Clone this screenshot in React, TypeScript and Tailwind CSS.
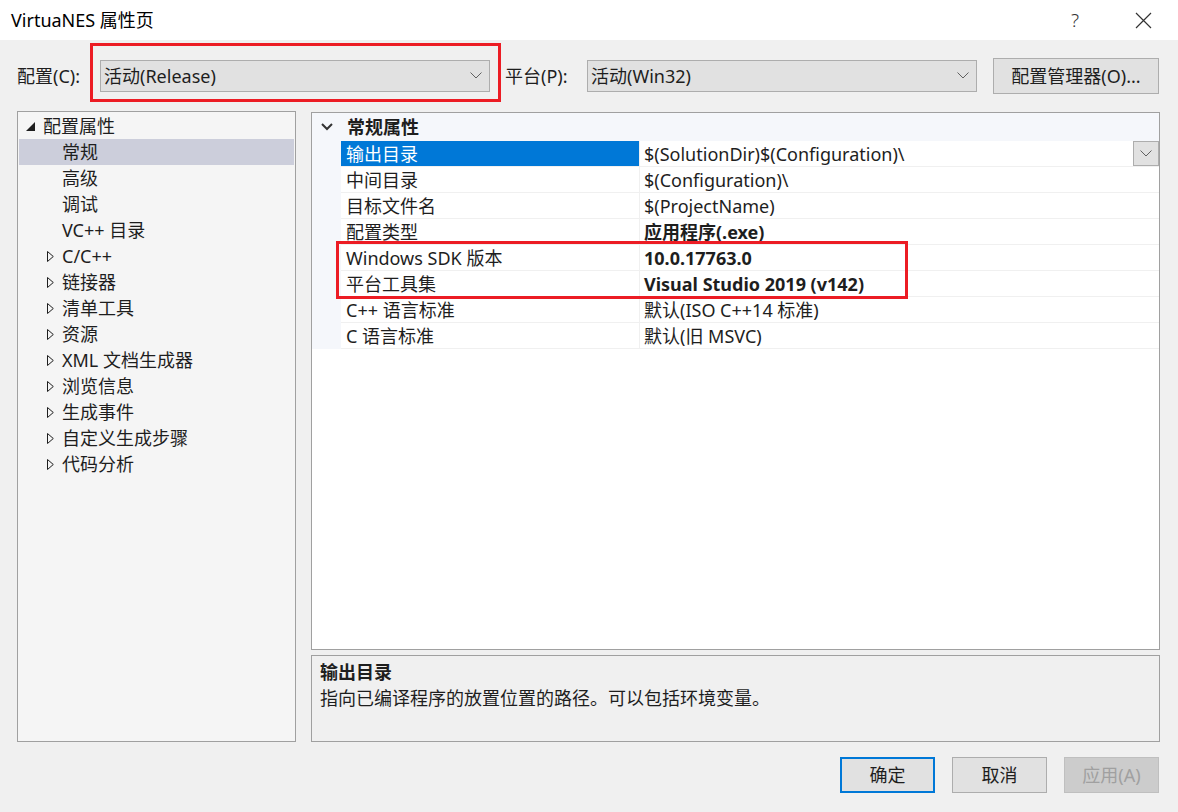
import React from 'react';

type TreeItem = { label: string; level: 0 | 1; expander?: 'open' | 'closed'; selected?: boolean };

const treeItems: TreeItem[] = [
  { label: '配置属性', level: 0, expander: 'open' },
  { label: '常规', level: 1, selected: true },
  { label: '高级', level: 1 },
  { label: '调试', level: 1 },
  { label: 'VC++ 目录', level: 1 },
  { label: 'C/C++', level: 1, expander: 'closed' },
  { label: '链接器', level: 1, expander: 'closed' },
  { label: '清单工具', level: 1, expander: 'closed' },
  { label: '资源', level: 1, expander: 'closed' },
  { label: 'XML 文档生成器', level: 1, expander: 'closed' },
  { label: '浏览信息', level: 1, expander: 'closed' },
  { label: '生成事件', level: 1, expander: 'closed' },
  { label: '自定义生成步骤', level: 1, expander: 'closed' },
  { label: '代码分析', level: 1, expander: 'closed' },
];

type Prop = { name: string; value: string; bold?: boolean; selected?: boolean };

const props: Prop[] = [
  { name: '输出目录', value: '$(SolutionDir)$(Configuration)\\', selected: true },
  { name: '中间目录', value: '$(Configuration)\\' },
  { name: '目标文件名', value: '$(ProjectName)' },
  { name: '配置类型', value: '应用程序(.exe)', bold: true },
  { name: 'Windows SDK 版本', value: '10.0.17763.0', bold: true },
  { name: '平台工具集', value: 'Visual Studio 2019 (v142)', bold: true },
  { name: 'C++ 语言标准', value: '默认(ISO C++14 标准)' },
  { name: 'C 语言标准', value: '默认(旧 MSVC)' },
];

function Chevron({ className = '' }: { className?: string }) {
  return (
    <svg width="12" height="7" viewBox="0 0 12 7" className={className}>
      <polyline points="0.5,0.5 6,6 11.5,0.5" fill="none" stroke="#606060" strokeWidth="1" />
    </svg>
  );
}

function Combo({ text, width }: { text: string; width: string }) {
  return (
    <div className={`flex h-[32px] ${width} items-center justify-between border border-[#adadad] bg-[#e1e1e1] pl-[3px] pr-[7px]`}>
      <span>{text}</span>
      <Chevron />
    </div>
  );
}

function TreeRow({ item }: { item: TreeItem }) {
  return (
    <div
      className={`flex h-[26px] items-center ${item.level === 0 ? 'pl-[7px]' : 'pl-[28px]'} ${
        item.selected ? 'bg-[#cccedb]' : ''
      }`}
    >
      <div className={`flex items-center ${item.level === 0 ? 'w-[17px]' : 'w-[15px]'}`}>
        {item.expander === 'open' && (
          <svg width="9" height="9" viewBox="0 0 9 9">
            <polygon points="9,0 9,9 0,9" fill="#1e1e1e" />
          </svg>
        )}
        {item.expander === 'closed' && (
          <svg width="7" height="11" viewBox="0 0 7 11">
            <polygon points="0.5,0.5 6.3,5.5 0.5,10.5" fill="none" stroke="#1e1e1e" strokeWidth="1" />
          </svg>
        )}
      </div>
      <span>{item.label}</span>
    </div>
  );
}

export default function App() {
  return (
    <div className="flex h-[812px] w-[1178px] flex-col bg-[#f0f0f0] font-[Noto_Sans,Noto_Sans_CJK_SC,sans-serif] text-[18px] leading-[26px] text-[#1e1e1e]">
      {/* title bar */}
      <div className="flex h-[40px] items-center justify-between bg-white pl-[11px]">
        <span className="text-[#000]">VirtuaNES 属性页</span>
        <div className="flex items-center">
          <span className="mr-[56px] text-[19px] font-light text-[#333]">?</span>
          <svg width="17" height="17" viewBox="0 0 17 17" className="mr-[26px]">
            <path d="M1 1 L16 16 M16 1 L1 16" stroke="#333" strokeWidth="1.2" />
          </svg>
        </div>
      </div>

      {/* configuration row */}
      <div className="flex h-[71px] items-center pl-[17px] pr-[18px]">
        <span className="w-[83px]">配置(C):</span>
        <div className="relative">
          <Combo text="活动(Release)" width="w-[390px]" />
          <div className="pointer-events-none absolute -left-[10px] -right-[11px] -top-[17px] -bottom-[10px] border-[3.5px] border-[#ec1c24]" />
        </div>
        <span className="ml-[15px] w-[82px]">平台(P):</span>
        <Combo text="活动(Win32)" width="w-[390px]" />
        <button className="ml-[16px] flex h-[36px] w-[166px] items-center justify-center border border-[#adadad] bg-[#e1e1e1]">
          配置管理器(O)...
        </button>
      </div>

      {/* main area */}
      <div className="flex h-[631px] gap-[15px] pl-[17px] pr-[18px]">
        <div className="w-[279px] border border-[#a0a0a0] bg-[#f5f5f5] p-[1px]">
          {treeItems.map((it) => (
            <TreeRow key={it.label} item={it} />
          ))}
        </div>

        <div className="flex flex-1 flex-col gap-[5px] pt-[1px]">
          <div className="flex-1 border border-[#a0a0a0] bg-white">
            <div className="flex h-[28px] items-center bg-[#f5f7fb]">
              <div className="flex w-[29px] justify-center pl-[1px]">
                <svg width="12" height="8" viewBox="0 0 12 8">
                  <polyline points="1,1 6,6 11,1" fill="none" stroke="#333" strokeWidth="2" />
                </svg>
              </div>
              <span className="pl-[6px] font-bold">常规属性</span>
            </div>
            <div className="relative">
              {props.map((p) => (
                <div key={p.name} className="flex h-[26px]">
                  <div className="w-[29px] bg-[#f5f7fb]" />
                  <div
                    className={`w-[299px] border-b border-r border-[#f0f0f0] pl-[5px] ${
                      p.selected ? 'bg-[#0078d7] text-white' : ''
                    }`}
                  >
                    {p.name}
                  </div>
                  <div className={`flex flex-1 justify-between border-b border-[#f0f0f0] pl-[4px] ${p.bold ? 'font-bold' : ''}`}>
                    <span>{p.value}</span>
                    {p.selected && (
                      <div className="flex h-[25px] w-[26px] items-center justify-center border border-[#adadad] bg-[#e1e1e1]">
                        <Chevron />
                      </div>
                    )}
                  </div>
                </div>
              ))}
              <div className="pointer-events-none absolute left-[24px] top-[100px] h-[58px] w-[572px] border-[3.5px] border-[#ec1c24]" />
            </div>
          </div>

          <div className="h-[87px] border border-[#a0a0a0] bg-[#f0f0f0] px-[8px] pt-[3px]">
            <div className="font-bold">输出目录</div>
            <div>指向已编译程序的放置位置的路径。可以包括环境变量。</div>
          </div>
        </div>
      </div>

      {/* buttons */}
      <div className="flex justify-end gap-[17px] pr-[19px] pt-[15px]">
        <button className="h-[36px] w-[95px] border-2 border-[#0078d7] bg-[#e1e1e1]">确定</button>
        <button className="h-[36px] w-[95px] border border-[#adadad] bg-[#e1e1e1]">取消</button>
        <button className="h-[36px] w-[95px] border border-[#bfbfbf] bg-[#cccccc] text-[#a0a0a0]">应用(A)</button>
      </div>
    </div>
  );
}
